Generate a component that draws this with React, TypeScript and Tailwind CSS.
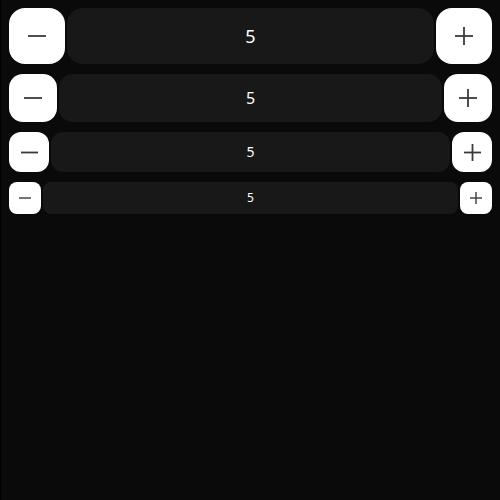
import { useState } from 'react'

type Size = 'xl' | 'lg' | 'md' | 'sm'

const sizes: Record<Size, { row: string; btn: string; field: string; text: string; icon: number; stroke: number }> = {
  xl: { row: 'h-14', btn: 'w-14 h-14 rounded-2xl', field: 'rounded-2xl', text: 'text-lg', icon: 18, stroke: 1.8 },
  lg: { row: 'h-12', btn: 'w-12 h-12 rounded-[14px]', field: 'rounded-[14px]', text: 'text-base', icon: 18, stroke: 1.8 },
  md: { row: 'h-10', btn: 'w-10 h-10 rounded-xl', field: 'rounded-xl', text: 'text-sm', icon: 17, stroke: 1.8 },
  sm: { row: 'h-8', btn: 'w-8 h-8 rounded-lg', field: 'rounded-lg', text: 'text-xs', icon: 12, stroke: 1.4 },
}

function Icon({ plus, size, stroke }: { plus?: boolean; size: number; stroke: number }) {
  const h = size / 2
  return (
    <svg width={size} height={size} viewBox={`0 0 ${size} ${size}`} fill="none" stroke="#3a3a3a" strokeWidth={stroke}>
      <line x1="0" y1={h} x2={size} y2={h} />
      {plus && <line x1={h} y1="0" x2={h} y2={size} />}
    </svg>
  )
}

function Stepper({ size }: { size: Size }) {
  const [value, setValue] = useState(5)
  const s = sizes[size]

  return (
    <div className={`flex items-center gap-0.5 ${s.row}`}>
      <button
        className={`${s.btn} shrink-0 bg-white flex items-center justify-center`}
        onClick={() => setValue(value - 1)}
      >
        <Icon size={s.icon} stroke={s.stroke} />
      </button>
      <div className={`flex-1 h-full bg-[#181818] ${s.field} flex items-center justify-center text-white ${s.text}`}>
        {value}
      </div>
      <button
        className={`${s.btn} shrink-0 bg-white flex items-center justify-center`}
        onClick={() => setValue(value + 1)}
      >
        <Icon plus size={s.icon} stroke={s.stroke} />
      </button>
    </div>
  )
}

export default function App() {
  return (
    <main className="min-h-screen bg-[#0a0a0a] border-l border-black pl-2 pr-2 pt-2 font-['Noto_Sans',sans-serif]">
      <div className="flex flex-col gap-2.5">
        <Stepper size="xl" />
        <Stepper size="lg" />
        <Stepper size="md" />
        <Stepper size="sm" />
      </div>
    </main>
  )
}
